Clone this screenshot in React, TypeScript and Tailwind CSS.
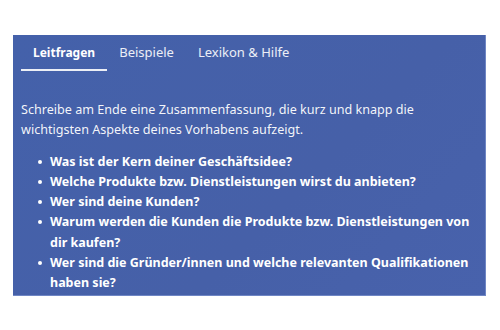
const questions = [
  "Was ist der Kern deiner Geschäftsidee?",
  "Welche Produkte bzw. Dienstleistungen wirst du anbieten?",
  "Wer sind deine Kunden?",
  "Warum werden die Kunden die Produkte bzw. Dienstleistungen von dir kaufen?",
  "Wer sind die Gründer/innen und welche relevanten Qualifikationen haben sie?",
];

export default function App() {
  return (
    <div className="w-[500px] h-[330px] bg-white pt-[35px] pl-[13px]">
      <div
        className="w-[473px] h-[261px] bg-[linear-gradient(135deg,#4461aa_0%,#4660a8_60%,#4862ac_100%)] border-r border-b border-[#6f86c4] text-white"
        style={{ fontFamily: '"Noto Sans", sans-serif' }}
      >
        {/* Tabs */}
        <div className="flex items-end pl-[8px] h-[36px] text-[13px]">
          <div className="relative px-[12px] h-full flex items-center font-bold text-[12px]">
            Leitfragen
            <span className="absolute left-0 right-0 bottom-0 h-[2px] bg-white/90" />
          </div>
          <div className="px-[12px] h-full flex items-center text-white/90">Beispiele</div>
          <div className="px-[12px] h-full flex items-center text-white/90">Lexikon &amp; Hilfe</div>
        </div>

        <div className="pl-[8px] pr-[12px] pt-[29px] text-[12.6px] leading-[20.3px]">
          <p className="text-white/95">
            Schreibe am Ende eine Zusammenfassung, die kurz und knapp die wichtigsten Aspekte
            deines Vorhabens aufzeigt.
          </p>
          <ul className="mt-[11px] pl-[29px] font-bold text-[12.5px]">
            {questions.map((q) => (
              <li key={q} className="relative">
                <span className="absolute -left-[12px] top-[8px] w-[4px] h-[4px] rounded-full bg-white" />
                {q}
              </li>
            ))}
          </ul>
        </div>
      </div>
    </div>
  );
}
